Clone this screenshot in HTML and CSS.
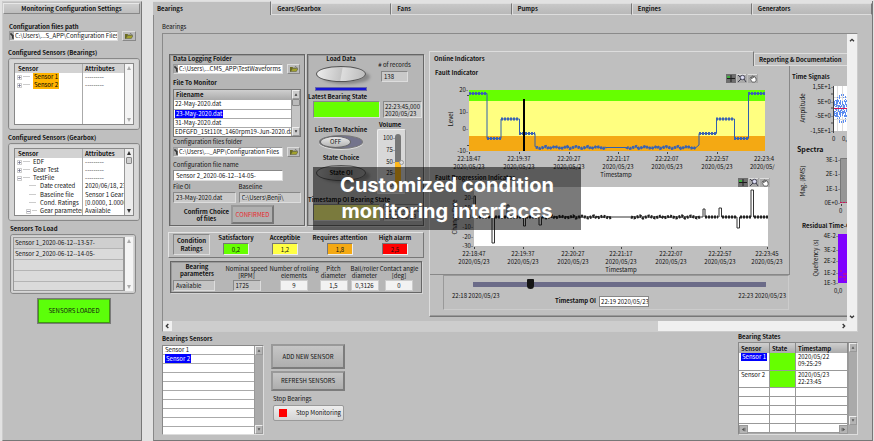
FILE: index.html
```html
<!DOCTYPE html>
<html lang="en">
<head>
<meta charset="utf-8">
<title>Condition Monitoring</title>
<link rel="stylesheet" href="styles.css">
</head>
<body>
<svg class="defs" aria-hidden="true">
  <symbol id="folder" viewBox="0 0 10 7"><path d="M0 1h3l1 1h4v1H3L1 7H0z" fill="#6a6a20"/><path d="M3 3h7L8 6.500H1z" fill="#a8a82c" stroke="#333" stroke-width=".5"/><path d="M6 1q1-1 2 0l1 1" fill="none" stroke="#222" stroke-width=".6"/></symbol>
  <symbol id="pathmark" viewBox="0 0 4 8"><path d="M1 1v2h2v4M3 5H2" fill="none" stroke="#111" stroke-width="1"/></symbol>
  <symbol id="plus" viewBox="0 0 5 5"><path d="M.5.5h4v4h-4z" fill="#fff" stroke="#aaa" stroke-width=".6"/><path d="M1 2.500h3M2.500 1v3" stroke="#557" stroke-width=".6"/></symbol>
  <symbol id="minus" viewBox="0 0 5 5"><path d="M.5.5h4v4h-4z" fill="#fff" stroke="#aaa" stroke-width=".6"/><path d="M1 2.500h3" stroke="#557" stroke-width=".6"/></symbol>
  <symbol id="up" viewBox="0 0 6 6"><path d="M3 1l2 4H1z" fill="currentColor"/></symbol>
  <symbol id="down" viewBox="0 0 6 6"><path d="M3 5l2-4H1z" fill="currentColor"/></symbol>
  <symbol id="left" viewBox="0 0 6 6"><path d="M1 3l3-2v4zM4.500 1h.7v4h-.7z" fill="currentColor"/></symbol>
  <symbol id="right" viewBox="0 0 6 6"><path d="M5 3L2 1v4zM.8 1h.7v4H.8z" fill="currentColor"/></symbol>
  <symbol id="chev-u" viewBox="0 0 6 6"><path d="M1.500 4L3 2.500 4.500 4" fill="none" stroke="#333"/></symbol>
  <symbol id="chev-d" viewBox="0 0 6 6"><path d="M1.500 2L3 3.500 4.500 2" fill="none" stroke="#333"/></symbol>
  <symbol id="chev-l" viewBox="0 0 6 6"><path d="M4 1.500L2.500 3 4 4.500" fill="none" stroke="#333"/></symbol>
  <symbol id="chev-r" viewBox="0 0 6 6"><path d="M2 1.500L3.500 3 2 4.500" fill="none" stroke="#333"/></symbol>
  <symbol id="tools" viewBox="0 0 32 9">
    <path d="M0 0h10v9H0z" fill="#6e6e6e"/><path d="M5 1v7M1 4.500h8" stroke="#1c1c1c"/><path d="M1 2h3v2H1z" fill="#3fae3f"/>
    <path d="M11 0h10v9H11zM22 0h10v9H22z" fill="#a9a9a9"/><path d="M11 .5h9M22 .5h9" stroke="#ddd"/>
    <circle cx="16.500" cy="3.500" r="2.200" fill="#dcdcf4" stroke="#334" stroke-width=".8"/><path d="M15 5l-3 3M12 1l2 2M18 5l2 3" stroke="#223" stroke-width=".8"/>
    <path d="M24 4l1-1 1 2V2h1v2l1-2 1 1v1h1v3l-1 1h-3z" fill="#fff" stroke="#333" stroke-width=".6"/>
  </symbol>
</svg>

<div class="app">
  <aside class="side">
    <h1 class="side-title">Monitoring Configuration Settings</h1>
    <label class="lbl first" for="cfg">Configuration files path</label>
    <div class="path-row">
      <span class="path"><svg class="mark"><use href="#pathmark"/></svg><input id="cfg" value="C:\Users\...S_APP\Configuration Files"></span>
      <button class="browse" aria-label="Browse configuration files"><svg><use href="#folder"/></svg></button>
    </div>
    <h2 class="lbl g8">Configured Sensors (Bearings)</h2>
    <div class="bezel">
      <div class="tree tree-a">
        <table>
          <thead><tr><th>Sensor</th><th>Attributes</th></tr></thead>
          <tbody>
            <tr><td><svg class="node"><use href="#plus"/></svg><i class="dash"></i><mark>Sensor 1</mark></td><td>---------</td></tr>
            <tr><td><svg class="node"><use href="#plus"/></svg><i class="dash"></i><mark>Sensor 2</mark></td><td>---------</td></tr>
            <tr class="fill"><td></td><td></td></tr>
          </tbody>
        </table>
        <div class="vbar off"><svg><use href="#up"/></svg><svg><use href="#down"/></svg></div>
      </div>
    </div>
    <h2 class="lbl g4">Configured Sensors (Gearbox)</h2>
    <div class="bezel">
      <div class="tree tree-b">
        <table>
          <thead><tr><th>Sensor</th><th>Attributes</th></tr></thead>
          <tbody>
            <tr><td><svg class="node"><use href="#plus"/></svg><i class="dash"></i>EDF</td><td>---------</td></tr>
            <tr><td><svg class="node"><use href="#plus"/></svg><i class="dash"></i>Gear Test</td><td>---------</td></tr>
            <tr><td><svg class="node"><use href="#minus"/></svg><i class="dash"></i>TestFile</td><td>---------</td></tr>
            <tr class="sub"><td><i class="dash"></i>Date created</td><td>2020/06/18, 23:</td></tr>
            <tr class="sub"><td><i class="dash"></i>Baseline file</td><td>Sensor 1 Gear</td></tr>
            <tr class="sub"><td><i class="dash"></i>Cond. Ratings</td><td>[0.0000, 1.0000</td></tr>
            <tr class="subnode"><td><svg class="node"><use href="#minus"/></svg><i class="dash"></i>Gear parameters</td><td>Available</td></tr>
          </tbody>
        </table>
        <div class="vbar"><svg><use href="#up"/></svg><i class="thumb"></i><svg><use href="#down"/></svg></div>
      </div>
    </div>
    <h2 class="lbl g4 in">Sensors To Load</h2>
    <div class="bezel small">
      <ul class="load-list"><li>Sensor 1_2020-06-12--13-57-</li><li>Sensor 2_2020-06-12--14-05-</li><li></li><li></li><li></li></ul>
      <div class="vbar off"><svg><use href="#up"/></svg><svg><use href="#down"/></svg></div>
    </div>
    <button class="loaded">SENSORS LOADED</button>
  </aside>

  <main class="main">
    <nav class="tabs">
      <button class="on">Bearings</button><button>Gears/Gearbox</button><button>Fans</button><button>Pumps</button><button>Engines</button><button>Generators</button>
    </nav>
    <div class="page">
      <div class="plain">Bearings</div>
      <section class="frame">
        <div class="view">
          <div class="controls">
            <div class="pair">
              <div class="box files">
                <label class="lbl" for="dlf">Data Logging Folder</label>
                <div class="path-row g1">
                  <span class="path"><svg class="mark"><use href="#pathmark"/></svg><input id="dlf" value="C:\Users\...CMS_APP\TestWaveforms"></span>
                  <button class="browse" aria-label="Browse data folder"><svg><use href="#folder"/></svg></button>
                </div>
                <h2 class="lbl g5">File To Monitor</h2>
                <div class="filelist">
                  <table>
                    <thead><tr><th>Filename</th></tr></thead>
                    <tbody><tr><td>22-May-2020.dat</td></tr><tr><td><span class="sel">23-May-2020.dat</span></td></tr><tr><td>31-May-2020.dat</td></tr><tr><td>EDFGFD_15t110t_1460rpm19-Jun-2020.dat</td></tr></tbody>
                  </table>
                  <div class="vbar gray"><svg><use href="#up"/></svg><i class="thumb"></i><svg><use href="#down"/></svg></div>
                </div>
                <label class="lbl n g1" for="cff">Configuration files folder</label>
                <div class="path-row g1">
                  <span class="path"><svg class="mark"><use href="#pathmark"/></svg><input id="cff" value="C:\Users\..._APP\Configuration Files"></span>
                  <button class="browse" aria-label="Browse configuration folder"><svg><use href="#folder"/></svg></button>
                </div>
                <label class="lbl n g4" for="cfn">Configuration file name</label>
                <input class="field white wide" id="cfn" value="Sensor 2_2020-06-12--14-05-">
                <div class="two g2">
                  <div><label class="lbl n" for="foi">File OI</label><input class="field" id="foi" value="23-May-2020.dat" readonly></div>
                  <div><label class="lbl n" for="bas">Baseline</label><input class="field" id="bas" value="C:\Users\Benji\" readonly></div>
                </div>
                <div class="confirm"><span>Confirm Choice<br>of files</span><button>CONFIRMED</button></div>
              </div>

              <div class="box live">
                <div class="row-a">
                  <div class="col"><span class="lbl">Load Data</span><button class="oval" aria-label="Load data"></button><progress value="1" max="1" aria-label="Loading"></progress></div>
                  <div class="col rec"><label class="lbl n" for="rec"># of records</label><input class="field" id="rec" value="138" readonly></div>
                </div>
                <span class="lbl">Latest Bearing State</span>
                <div class="state"><i class="lamp green"></i><output class="stamp">22:23:45,000<br>2020/05/23</output></div>
                <div class="row-c">
                  <div class="col">
                    <span class="lbl">Listen To Machine</span><button class="toggle"><span>OFF</span></button>
                    <span class="lbl g5">State Choice</span><button class="oval dark">State OI</button>
                  </div>
                  <div class="col vol">
                    <label class="lbl" for="vol">Volume</label>
                    <div class="volbox"><div class="scale"><span>100-</span><span>75-</span><span>50-</span><span>25-</span><span>0-</span></div><input id="vol" type="range" value="50"></div>
                  </div>
                </div>
                <span class="lbl">Timestamp OI Bearing State</span>
                <div class="state"><i class="lamp yellow"></i><output class="stamp">22:19:37,000<br>2020/05/23</output></div>
              </div>
            </div>

            <div class="ratings">
              <h2>Condition<br>Ratings</h2>
              <div><label for="r1">Satisfactory</label><input id="r1" class="c1" value="0,2"></div>
              <div><label for="r2">Acceptible</label><input id="r2" class="c2" value="1,2"></div>
              <div><label for="r3">Requires attention</label><input id="r3" class="c3" value="1,8"></div>
              <div><label for="r4">High alarm</label><input id="r4" class="c4" value="2,5"></div>
            </div>

            <div class="box params">
              <div class="p0"><label for="p0">Bearing<br>parameters</label><input id="p0" class="field" value="Available" readonly></div>
              <div><label for="p1">Nominal speed<br>[RPM]</label><input id="p1" class="field" value="1725" readonly></div>
              <div><label for="p2">Number of rolling<br>elements</label><input id="p2" value="9"></div>
              <div><label for="p3">Pitch<br>diameter</label><input id="p3" value="1,5"></div>
              <div><label for="p4">Ball/roller<br>diameter</label><input id="p4" value="0,3126"></div>
              <div><label for="p5">Contact angle<br>[deg]</label><input id="p5" value="0"></div>
            </div>
          </div>

          <div class="online">
            <nav class="subtabs"><button class="on">Online Indicators</button><button>Reporting &amp; Documentation</button></nav>
            <div class="online-body">
              <div class="charts">
                <div class="chart-group">
                  <div class="chart-head h-a"><h2 class="lbl">Fault Indicator</h2><svg class="tools"><use href="#tools"/></svg></div>
                  <svg class="chart" width="356" height="94" viewBox="431 84 356 94">
                    <path fill="#66ff00" d="M469 90h296v11H469z"/><path fill="#ffff80" d="M469 101h296v35H469z"/><path fill="#f4a913" d="M469 136h296v15H469z"/>
                    <g class="fi"><path id="fi-line"/><path id="fi-dots"/></g>
                    <path d="M524 99v52" stroke="#000" stroke-width="2"/>
                    <path class="tick" d="M467 95.500h2M467 145.500h2M469.500 152v2M519.500 152v2M569.500 152v2M618.500 152v2M667.500 152v2M717.500 152v2"/>
                    <g class="end"><text x="468" y="92">20-</text><text x="468" y="114">10-</text><text x="468" y="131">0-</text><text x="468" y="153">-10-</text></g>
                    <text class="mid" transform="translate(453 119) rotate(-90)">Level</text>
                    <g class="mid">
                      <text x="469" y="161">22:18:47</text><text x="469" y="169">2020/05/23</text><text x="519" y="161">22:19:37</text><text x="519" y="169">2020/05/23</text><text x="569" y="161">22:20:27</text><text x="569" y="169">2020/05/23</text><text x="618" y="161">22:21:17</text><text x="618" y="169">2020/05/23</text><text x="667" y="161">22:22:07</text><text x="667" y="169">2020/05/23</text><text x="717" y="161">22:22:57</text><text x="717" y="169">2020/05/23</text><text x="616" y="177">Timestamp</text>
                    </g>
                    <text x="754" y="161">22:23:4</text><text x="750" y="169">2020/05/</text>
                  </svg>
                  <div class="chart-head h-b"><h2 class="lbl">Fault Progression Indicator</h2><svg class="tools"><use href="#tools"/></svg></div>
                  <svg class="chart" width="356" height="87" viewBox="431 187 356 87">
                    <path fill="#fff" d="M474 187h294v59H474z"/>
                    <g class="fp"><path id="fp-line"/><path id="fp-dots"/></g>
                    <path class="tick" d="M474.500 247v2M523.500 247v2M573.500 247v2M621.500 247v2M671.500 247v2M720.500 247v2M767.500 247v2"/>
                    <g class="end"><text x="473" y="200">20-</text><text x="473" y="210">10-</text><text x="473" y="219">0-</text><text x="473" y="229">-10-</text><text x="473" y="239">-20-</text><text x="473" y="248">-30-</text></g>
                    <text class="mid" transform="translate(457 217) rotate(-90)">Change Rate</text>
                    <g class="mid">
                      <text x="474" y="256">22:18:47</text><text x="474" y="264">2020/05/23</text><text x="523" y="256">22:19:37</text><text x="523" y="264">2020/05/23</text><text x="573" y="256">22:20:27</text><text x="573" y="264">2020/05/23</text><text x="621" y="256">22:21:17</text><text x="621" y="264">2020/05/23</text><text x="671" y="256">22:22:07</text><text x="671" y="264">2020/05/23</text><text x="720" y="256">22:22:57</text><text x="720" y="264">2020/05/23</text><text x="767" y="256">22:23:45</text><text x="767" y="264">2020/05/23</text><text x="621" y="272">Timestamp</text>
                    </g>
                  </svg>
                </div>
                <div class="timeline">
                  <input type="range" value="19" aria-label="Timestamp">
                  <div class="ends"><span>22:18 2020/05/23</span><span>22:23 2020/05/23</span></div>
                  <div class="oi"><label for="toi">Timestamp OI</label><input id="toi" value="22:19 2020/05/23"></div>
                </div>
              </div>
              <svg class="signals" width="57" height="250" viewBox="790 66 57 250">
                <text class="b" x="792" y="79">Time Signals</text>
                <path fill="#fff" d="M833 86h14v45h-14z"/><path d="M837.500 86v45M842.500 86v45M833 97.500h14M833 119.500h14" stroke="#ddd" fill="none"/>
                <path id="noise" stroke="#5b8cf0" stroke-width="1" fill="none"/><path d="M833 108.500h14" stroke="#d2125a"/>
                <g class="end"><text x="833" y="89">1,5E+1-</text><text x="833" y="104">5E+0-</text><text x="833" y="118">-5E+0-</text><text x="833" y="133">-1,5E+1-</text></g>
                <text class="mid" transform="translate(805 108) rotate(-90)">Amplitude</text>
                <path class="tick" d="M833.500 86v47M831 94h2M831 108h2M831 123h2"/>
                <text x="832" y="141">0</text><text x="842" y="141">0,</text>
                <text class="b big" x="797" y="152">Spectra</text>
                <path fill="#969696" stroke="#777" d="M840.500 158.500h8v44h-8z"/><path d="M840 202.500h7" stroke="#d2125a" stroke-dasharray="2 1"/>
                <g class="end"><text x="840" y="162">3E-1-</text><text x="840" y="176">2E-1-</text><text x="840" y="191">1E-1-</text><text x="840" y="205">0E+0-</text></g>
                <text class="mid" transform="translate(805 181) rotate(-90)">Mag. (RMS)</text>
                <path class="tick" d="M841.500 204v2"/><text x="839" y="213">0</text>
                <text class="b" x="802" y="228">Residual Time-C</text>
                <path fill="#7f00ff" d="M838 234h9v49h-9z"/><path d="M840 271h2M843 274h4M839 277h3M843 277h3M844 280h2" stroke="#d0186a"/>
                <g class="end"><text x="838" y="238">4E-2-</text><text x="838" y="252">3E-2-</text><text x="838" y="263">2E-2-</text><text x="838" y="275">1E-2-</text><text x="838" y="285">1E-3-</text></g>
                <text class="mid" transform="translate(818 258) rotate(-90)">Quefrency (s)</text>
                <text x="834" y="293">0,0</text>
              </svg>
            </div>
          </div>
        </div>
        <div class="win-v"><svg><use href="#chev-u"/></svg><svg><use href="#chev-d"/></svg></div>
        <div class="win-h"><svg><use href="#chev-l"/></svg><i></i><svg><use href="#chev-r"/></svg></div>
      </section>

      <div class="bottom">
        <div class="sensors">
          <h2 class="lbl">Bearings Sensors</h2>
          <div class="sunk">
            <ul><li>Sensor 1</li><li><span class="sel">Sensor 2</span></li><li></li><li></li><li></li><li></li><li></li><li></li><li></li><li></li></ul>
            <div class="vbar gray flat"><svg><use href="#up"/></svg><svg><use href="#down"/></svg></div>
          </div>
        </div>
        <div class="actions">
          <button class="act tall">ADD NEW SENSOR</button>
          <button class="act">REFRESH SENSORS</button>
          <span class="lbl n g4">Stop Bearings</span>
          <button class="stop"><i></i>Stop Monitoring</button>
        </div>
        <div class="states">
          <h2 class="lbl">Bearing States</h2>
          <div class="sunk grid">
            <table>
              <thead><tr><th>Sensor</th><th>State</th><th>Timestamp</th></tr></thead>
              <tbody>
                <tr class="tall"><td><span class="sel">Sensor 1</span></td><td class="ok"></td><td>2020/05/22<br>09:25:29</td></tr>
                <tr class="tall"><td>Sensor 2</td><td class="ok"></td><td>2020/05/23<br>22:23:45</td></tr>
                <tr><td></td><td></td><td></td></tr><tr><td></td><td></td><td></td></tr><tr><td></td><td></td><td></td></tr><tr><td></td><td></td><td></td></tr><tr><td></td><td></td><td></td></tr>
              </tbody>
            </table>
            <div class="vbar gray flat"><svg><use href="#up"/></svg><svg><use href="#down"/></svg></div>
            <div class="hbar"><svg><use href="#left"/></svg><svg><use href="#right"/></svg></div>
          </div>
        </div>
      </div>
    </div>
  </main>
  <p class="caption">Customized condition<br>monitoring interfaces</p>
</div>
<script src="script.js"></script>
</body>
</html>
```
FILE: styles.css
```css
:root{--face:#bfbfbf}
*{box-sizing:border-box}
body{margin:0;background:#e2e2e2;color:#111;font:6px/8px "Noto Sans CJK SC","Open Sans",sans-serif}
h1,h2,p,ul{margin:0;padding:0;font-size:inherit}
ul{list-style:none}
button,input,output{font:inherit;color:inherit;margin:0;padding:0;border:0;border-radius:0;min-width:0}
button{background:none;white-space:nowrap}
table{border-collapse:collapse;table-layout:fixed;width:100%}
th,td{padding:0;text-align:left;font-weight:400;white-space:nowrap;overflow:hidden}
th{font-weight:700}
svg text{font-size:6px;fill:#111}
.defs{position:absolute;width:0;height:0}
.app{position:relative;display:grid;grid-template-columns:140px minmax(0,1fr);gap:11px;padding:1px 1px 0 2px;min-height:100vh}
.lbl{display:block;font-weight:700;line-height:8px;white-space:nowrap}
.lbl.n{font-weight:400}
.lbl.in{padding-left:2px}
.g1{margin-top:1px}.g2{margin-top:2px}.g4{margin-top:4px}.g5{margin-top:5px}.g8{margin-top:8px}
.sel{background:#00f;color:#fff;padding:0 1px}

.side{background:var(--face);border:1px solid #ccc;border-right:1px solid #777;border-bottom-color:#777;padding:1px 1px 0 5px;overflow:hidden}
.side-title{margin-left:-5px;height:11px;line-height:9px;text-align:center;border:1px solid #888;border-top-color:#e8e8e8;border-left-color:#e8e8e8;background:linear-gradient(#cfcfcf,#bdbdbd)}
.first{margin-top:9px;padding-left:1px}
.path-row{display:flex;gap:4px;height:10px;padding-right:4px}
.side .path-row{padding-left:1px}
.path{flex:1;display:flex;min-width:0;border:1px solid #999;border-right-color:#ddd;border-bottom-color:#ddd;background:#fff}
.path input{flex:1;padding-left:1px;background:#fff;height:8px}
.mark{width:4px;height:8px;background:#aaa}
.browse{width:14px;border:1px solid #888;border-top-color:#ddd;border-left-color:#ddd;background:#bbb;display:flex;align-items:center;justify-content:center}
.browse svg{width:8px;height:6px}
.bezel{margin-top:1px;border:1px solid #888;outline:1px solid #ccc;outline-offset:-2px;border-radius:3px;background:#d6d6d6;padding:4px 5px;display:flex}
.tree{flex:1;display:flex;border:1px solid #888;background:#fff;min-width:0;overflow:hidden}
.tree table{flex:1}
.tree-a{height:62px}.tree-b{height:68px}
.tree td{height:8px;line-height:8px}
.tree .fill td{height:36px}
.tree th{height:9px;line-height:9px;background:#d2d2d2;padding-left:3px}
.tree th:first-child{width:62%}
.tree td+td,.tree th+th{border-left:1px solid #aaa;padding-left:2px}
.tree mark{background:#ffb400;padding:0 1px;display:inline-block;line-height:8px}
.node{width:5px;height:5px;margin:0 1px 0 2px;vertical-align:-1px}
.dash{display:inline-block;width:7px;border-top:1px solid #ccc;vertical-align:2px;margin-right:3px}
.sub .dash{margin-left:14px;margin-right:4px}
.subnode .node{margin-left:11px}
.subnode .dash{width:5px;margin-right:3px}
.vbar{width:9px;flex:none;display:flex;flex-direction:column;align-items:center;background:#ececec;border-left:1px solid #999;color:#333}
.vbar svg{width:6px;height:8px}
.vbar svg:last-child{margin-top:auto}
.vbar.off{color:#aaa;background:#f4f4f4}
.vbar .thumb{width:6px;height:7px;background:#d0d0d0;border:1px solid #888;border-radius:1px}
.vbar.gray{background:#c4c4c4}
.vbar.gray svg{width:8px;height:9px;padding:1px;background:#ccc;border:1px solid #999;border-top-color:#eee;border-left-color:#eee}
.vbar.gray .thumb{width:8px;background:#bbb}
.vbar.flat{background:#aaa;color:#555}
.vbar.flat svg{background:#b4b4b4}
.small{margin-left:2px;margin-right:4px;padding:2px;height:60px}
.load-list{flex:1;border:1px solid #999;background:#dadada}
.load-list li{height:11px;line-height:10px;border-bottom:1px solid #b4b4b4;padding-left:1px}
.load-list li:first-child{background:#cfcfcf}.load-list li:last-child{border:0}
.loaded{display:block;width:74px;height:26px;margin:4px auto 0 29px;background:#5cff0a;border:2px solid #3f9a10;border-top-color:#58b51f;outline:1px solid #7a7a7a;outline-offset:-1px}

.main{min-width:0;display:flex;flex-direction:column;border-right:1px solid #777}
.tabs{display:flex;height:14px}
.tabs button{flex:1;margin-top:2px;padding-left:5px;text-align:left;font-weight:700;border-top:1px solid #ddd;border-right:1px solid #777;border-left:1px solid #ddd;border-bottom:1px solid #ddd;background:linear-gradient(#c8c8c8,#b8b8b8)}
.tabs .on{margin-top:0;border-bottom:0;background:var(--face);border-left:0;padding-left:4px}
.page{flex:1;background:var(--face);border-left:1px solid #888;border-bottom:1px solid #777;padding:8px 14px 4px 8px}
.plain{height:10px}
.frame{display:grid;grid-template-columns:minmax(0,1fr) 10px;grid-template-rows:auto 10px;border:1px solid #8a8a8a;border-right-color:#ccc;border-bottom-color:#ccc}
.view{display:flex;overflow:hidden;height:287px;padding-left:5px}
.win-v{display:flex;flex-direction:column;justify-content:space-between;align-items:center;background:#f0f0f0;padding:2px 0 0}
.win-v svg,.win-h svg{width:8px;height:8px;flex:none}
.win-h{grid-column:1/3;display:flex;align-items:center;background:#f0f0f0;padding:0 9px 0 0;gap:1px}
.win-h i{width:71%;height:10px;background:#cdcdcd;margin-right:auto}

.controls{flex:none;width:256px;padding-top:20px}
.pair{display:grid;grid-template-columns:136px 117px;gap:2px;padding-left:1px;height:172px}
.box{border:1px solid #666;box-shadow:inset 1px 1px #999,1px 1px #d4d4d4;background:#b6b6b6}
.files{padding:0 3px}
.files .path-row{padding-right:1px}
.files .browse{width:13px}
.filelist{margin-top:2px;height:48px;display:flex;border:1px solid #777;background:#fff;overflow:hidden}
.filelist table{flex:1}
.filelist th{height:10px;background:linear-gradient(#cfcfcf,#aaa);padding-left:2px}
.filelist td{height:9px;line-height:8px;padding-left:1px;border-bottom:1px solid #aaa}
.field{display:block;width:100%;height:11px;padding-left:2px;background:#c9c9c9;border:1px solid #888;border-right-color:#ddd;border-bottom-color:#ddd}
.field.white{background:#fff}
.wide{width:110px;margin-top:1px}
.two{display:grid;grid-template-columns:1fr 1fr;gap:3px}
.two .field{margin-top:1px}
.confirm{display:flex;justify-content:flex-end;gap:2px;padding-right:27px;margin-top:2px;text-align:center;font-weight:700;line-height:7px;align-items:center}
.confirm button{width:43px;height:19px;font-weight:400;color:#e8252b;border:2px solid #777;border-top-color:#999;border-left-color:#999;background:#b0b0b0}
.col{display:flex;flex-direction:column;align-items:center}
.row-a{display:grid;grid-template-columns:66px 1fr;height:38px}
.rec{padding-top:6px;padding-right:8px}
.rec .field{width:27px;margin-top:2px}
.oval{width:50px;height:16px;margin-top:3px;border-radius:50%;border:1px solid #555;background:linear-gradient(100deg,#eee,#c4c4c4 50%,#ddd 52%,#bbb);box-shadow:5px 3px 3px -1px #888}
progress{appearance:none;width:52px;height:4px;margin-top:5px;border:1px solid #66a;background:#11c}
progress::-webkit-progress-value{background:#1414d2}
progress::-webkit-progress-bar{background:#11c}
.state{display:flex;gap:3px;height:17px;padding:0 1px 0 5px}
.lamp{flex:1;border:1px solid #888;border-bottom-color:#ddd;border-right-color:#ddd}
.green{background:#6f0}.yellow{background:#ffff80}
.stamp{flex:none;width:39px;padding:1px 0 0 1px;line-height:7px;border:1px solid #888;border-right-color:#ddd;border-bottom-color:#ddd;background:#c9c9c9}
.row-c{display:grid;grid-template-columns:66px 1fr;margin-top:3px;height:75px}
.row-c .col:first-child{padding-top:5px}
.toggle{width:44px;height:14px;border-radius:50%;border:1px solid #777;background:#74748c;text-align:left;margin-top:1px;box-shadow:0 1px #ddd}
.toggle span{display:block;width:31px;height:12px;line-height:10px;border-radius:50%;text-align:center;background:linear-gradient(#e8e8e8,#b4b4b4);border:1px solid #666}
.dark{background:linear-gradient(100deg,#b8b8b8,#8c8c8c 45%,#a4a4a4);font-weight:700}
.vol{align-items:flex-start;padding-left:3px}
.vol .lbl{padding-left:2px}
.volbox{display:flex;width:29px;height:65px;padding:4px 3px 4px 1px;background:#d8d8d8;border:1px solid #eee;border-right-color:#999;border-radius:2px}
.scale{display:flex;flex-direction:column;justify-content:space-between;width:16px;text-align:right}
.volbox input{appearance:none;writing-mode:vertical-lr;direction:rtl;width:6px;height:56px;border-radius:3px;background:linear-gradient(#777 50%,#ffb81c 50%)}
.volbox input::-webkit-slider-thumb{appearance:none;width:5px;height:5px;border-radius:50%;background:#ddd;border:1px solid #999;margin-left:6px}
.ratings{display:grid;grid-template-columns:37px 1fr 1fr 58px 1fr;height:26px;margin-top:6px;padding:1px 5px 2px 4px;border:1px solid #e4e4e4;border-right-color:#777;border-bottom-color:#777;background:#bcbcbc;text-align:center;gap:3px}
.ratings h2{line-height:8px;padding-top:2px;border:1px solid #888;border-right-color:#ddd;border-bottom-color:#ddd}
.ratings label{display:block;font-weight:700;line-height:8px;white-space:nowrap}
.ratings input{width:26px;height:12px;text-align:center;border:1px solid #777;border-right-color:#eee;border-bottom-color:#eee;display:block;margin:1px auto 0}
.c1{background:#6f0}.c2{background:#ff4}.c3{background:#f4a913}.c4{background:#f00}
.params{display:grid;grid-template-columns:50px 45px 48px 29px 31px 36px;gap:1px;height:32px;margin:3px 2px 0;padding:0 2px;line-height:7px;text-align:center}
.params div{display:flex;flex-direction:column;align-items:center;padding-top:3px}
.params label{white-space:nowrap;height:15px}
.params .p0{align-items:flex-start;padding-top:1px}
.p0 label{font-weight:700;height:16px;padding-left:7px}
.params .p0 label{height:17px}
.params input{width:28px;height:11px;text-align:center;background:#f2f2f2;border:1px solid #ccc}
.params .field{background:#c4c4c4;border-color:#888 #ddd #ddd #888;text-align:left}
.params .p0 .field{width:42px}

.online{flex:1;min-width:0;margin-left:5px;padding-top:17px;overflow:hidden}
.subtabs{display:flex;height:15px}
.subtabs button{flex:none;width:30%;margin-top:2px;text-align:left;padding-left:4px;font-weight:700;border-top:1px solid #ddd;border-bottom:1px solid #ddd;border-left:1px solid #ddd}
.subtabs .on{width:325px;margin-top:0;border-bottom:0;border-right:1px solid #777}
.online-body{display:flex;border-left:1px solid #ddd;border-bottom:1px solid #777;box-shadow:0 -1px #999 inset;height:251px}
.charts{flex:none;width:360px}
.chart-group{border-right:1px solid #888;border-bottom:1px solid #888;height:209px;padding-left:1px}
.chart-head{display:flex;justify-content:space-between;padding-left:4px}
.h-a{height:18px;padding-top:3px;padding-right:31px}
.h-b{height:13px;margin-top:-4px;padding-right:19px;align-items:flex-end}
.h-b .lbl{align-self:flex-start}
.h-a .tools{margin-top:5px}
.tools{width:32px;height:9px}
.chart,.signals{display:block;flex:none}
.mid{text-anchor:middle}.end{text-anchor:end}
.tick{stroke:#444;stroke-width:1;fill:none}
.signals .b{font-weight:700}.signals .big{font-size:7px}
.fi path,.fp path{fill:none}
#fi-line{stroke:#2f5fb0;stroke-width:1}
#fi-dots{stroke:#3a62b4;stroke-width:3;stroke-dasharray:2 1}
#fp-line{stroke:#333;stroke-width:1}
#fp-dots{stroke:#222;stroke-width:3;stroke-dasharray:2 1}
.timeline{margin:0 1px 0 13px;height:35px;border:1px solid #999;border-right-color:#ccc;border-bottom-color:#ccc;padding:2px 2px 0 8px}
.timeline input[type=range]{appearance:none;display:block;height:11px;width:293px;margin-left:21px;border-radius:3px;background:linear-gradient(transparent 4px,#6b6b88 4px,#6b6b88 9px,transparent 9px)}
.timeline input::-webkit-slider-thumb{appearance:none;width:7px;height:10px;background:#151515;border-radius:1px 1px 4px 4px}
.ends{display:flex;justify-content:space-between;margin-top:3px}
.oi{display:flex;justify-content:center;gap:3px;margin-top:-4px;padding-right:34px;font-weight:700;line-height:10px}
.oi input{width:50px;height:11px;background:#fff;border:1px solid #888;font-weight:400;padding-left:1px}

.bottom{display:flex;padding-top:3px}
.sensors{width:102px}
.sunk{display:flex;border:1px solid #888;border-right-color:#ddd;border-bottom-color:#ddd}
.sensors .lbl{margin-bottom:2px}
.sensors .sunk{height:90px}
.sensors ul{flex:1;background:#fff;overflow:hidden}
.sensors li{height:9px;line-height:8px;border-bottom:1px solid #aaa;padding-left:2px}
.actions{margin-left:7px;padding-top:9px;width:74px;display:flex;flex-direction:column}
.act{height:20px;margin-top:2px;border:2px solid #7c7c7c;border-top-color:#999;border-left-color:#999;background:linear-gradient(#c6c6c6,#aeaeae)}
.act.tall{height:25px;margin-top:0}
.actions .lbl,.stop{margin-left:2px}
.stop{margin-top:2px;height:16px;border:1px solid #999;border-radius:2px;background:linear-gradient(#eee,#d4d4d4);display:flex;align-items:center;gap:9px;padding-left:5px;width:71px}
.stop i{width:8px;height:8px;background:#f00}
.states{margin-left:auto;width:120px;margin-top:-2px}
.states .grid{margin-top:1px;height:93px;display:grid;grid-template-columns:minmax(0,1fr) 9px;grid-template-rows:minmax(0,1fr) 9px;overflow:hidden;background:#aaa}
.states table{background:#fff;align-self:start}
.states .vbar{overflow:hidden}
.states th{height:10px;line-height:9px;background:linear-gradient(#cfcfcf,#aaa);border-right:1px solid #888;padding-left:2px}
.states th:nth-child(1){width:28%}.states th:nth-child(2){width:24%}
.states td{height:9px;line-height:7px;border:1px solid #999;border-top:0;border-left:0;padding-left:2px;vertical-align:top}
.states .tall td{height:17px}
.states .ok{background:#6f0}
.hbar{display:flex;justify-content:space-between;color:#555}
.hbar svg{width:9px;height:9px;padding:1px;border:1px solid #999;background:#b4b4b4}

.caption{position:absolute;left:313px;top:167px;width:268px;height:63px;padding-top:5px;background:rgba(0,0,0,.52);color:#fff;text-align:center;font:700 20px/26px Inter,"Open Sans",sans-serif}
```
FILE: script.js
```js
// Builds the step traces of the two indicator charts and the raw signal scatter.
const wobble = (from, to, y, amp) => {
  let d = '';
  for (let x = from, i = 0; x <= to; x += 3, i++) d += `L${x} ${y + [0, 1, 0, -1, 1, 0, -1][i % 7] * amp}`;
  return d;
};
const set = (id, d) => document.getElementById(id).setAttribute('d', d);

set('fi-line', 'M469 93.500H487V138.500H501V119H519.500V133.500H535V146.500' + wobble(537, 608, 147.500, 1) + 'H627' + wobble(627, 698, 147.500, 1) + 'L699 145V133.500H716.500V119H734.500V138.500H748.500V93.500H765');
set('fi-dots', 'M469 93.500H487M487 138.500H501M501 119H519M519 133.500H535M536 147' + wobble(537, 608, 147.500, 1) + 'M627 147' + wobble(627, 698, 147.500, 1) + 'M699 133.500H716M716 119H734M734 138.500H748M748 93.500H765');
set('fp-line', 'M474 217V196H475.500V217H492V243H494.500V217H507V205H509V217H523.500V226H525.500V217H539V225H541.500V217H703V209H705V217H719V208H721.500V217H737V228H739.500V217H751V190H753.500V217H768');
set('fp-dots', 'M476 217H491M495 217H523M526 217H539M542 217' + wobble(543, 612, 217, 1) + 'M631 217' + wobble(631, 702, 217, 1) + 'M705 217H718M722 217H737M740 217H751M754 217H768');

let noise = '';
for (let i = 0; i < 240; i++) {
  const x = 833 + (i * 5) % 14;
  const y = 108.5 + Math.round(Math.sin(i * 12.9) * (i % 4 ? 8 : 14));
  noise += `M${x} ${y}h1`;
}
set('noise', noise);
```
